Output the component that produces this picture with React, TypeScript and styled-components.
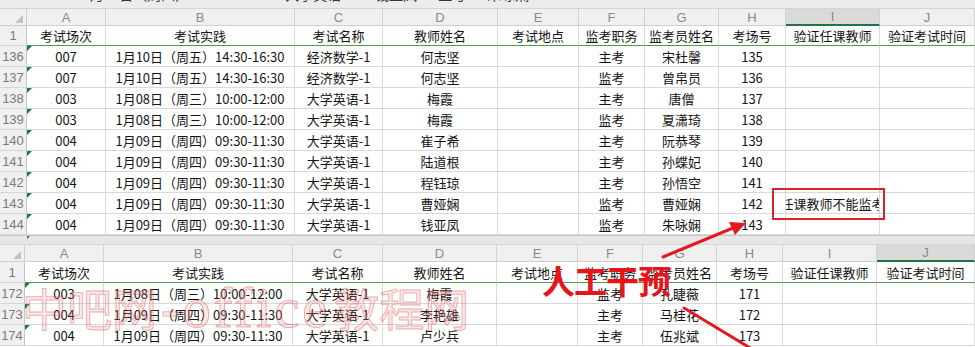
import React from 'react'
import styled, { createGlobalStyle } from 'styled-components'

const GlobalStyle = createGlobalStyle`
  html, body {
    margin: 0;
    padding: 0;
    background: #fff;
  }
  body {
    width: 975px;
    height: 347px;
    overflow: hidden;
    font-family: "Noto Sans CJK SC", "Liberation Sans", sans-serif;
  }
`

const Screen = styled.div`
  position: relative;
  width: 975px;
  height: 347px;
  overflow: hidden;
  display: flex;
  flex-direction: column;
  background: #fff;
`

const FormulaStrip = styled.div`
  height: 9px;
  flex: none;
  box-sizing: border-box;
  background: #ececec;
  border-bottom: 1px solid #d4d4d4;
  overflow: hidden;
  padding-left: 82px;
`

const FormulaText = styled.div`
  margin-top: -15px;
  font-size: 14px;
  line-height: 18px;
  color: #333;
  white-space: nowrap;
  word-spacing: 18px;
`

const Grid = styled.div<{ $cols: string; $rows: string }>`
  display: grid;
  flex: none;
  grid-template-columns: ${p => p.$cols};
  grid-template-rows: ${p => p.$rows};
`

const Corner = styled.div`
  position: relative;
  background: #f0f0f0;
  border-right: 1px solid #cfcfcf;
  border-bottom: 1px solid #cfcfcf;

  &::after {
    content: '';
    position: absolute;
    right: 3px;
    bottom: 2px;
    width: 0;
    height: 0;
    border-left: 8px solid transparent;
    border-bottom: 8px solid #c2c2c2;
  }
`

const ColHead = styled.div<{ $selected?: boolean }>`
  display: flex;
  align-items: center;
  justify-content: center;
  box-sizing: border-box;
  background: ${p => (p.$selected ? '#dadada' : '#f0f0f0')};
  border-right: 1px solid #d2d2d2;
  border-bottom: ${p => (p.$selected ? '2px solid #217346' : '1px solid #cfcfcf')};
  font-family: "Liberation Sans", Arial, sans-serif;
  font-size: 13px;
  color: #8a8a8a;
`

const RowHead = styled.div`
  display: flex;
  align-items: center;
  justify-content: center;
  box-sizing: border-box;
  background: #f0f0f0;
  border-right: 1px solid #c6c6c6;
  border-bottom: 1px solid #d6d6d6;
  font-family: "Liberation Sans", Arial, sans-serif;
  font-size: 13px;
  color: #7a7a7a;
  overflow: hidden;
`

const Cell = styled.div<{ $flag?: boolean; $title?: boolean }>`
  position: relative;
  display: flex;
  align-items: center;
  justify-content: center;
  box-sizing: border-box;
  background: #fff;
  border-right: 1px solid #d9d9d9;
  border-bottom: ${p => (p.$title ? '1px solid #4f9a55' : '1px solid #d9d9d9')};
  font-size: 13px;
  color: #151515;
  white-space: nowrap;
  overflow: hidden;

  &::before {
    content: '';
    display: ${p => (p.$flag ? 'block' : 'none')};
    position: absolute;
    left: 0;
    top: 0;
    border-top: 5px solid #1f7a37;
    border-right: 5px solid transparent;
  }
`

const Splitter = styled.div`
  position: relative;
  height: 10px;
  flex: none;
  box-sizing: border-box;
  background: #e6e6e6;
  border-top: 1px solid #c9c9c9;
  border-bottom: 1px solid #d6d6d6;

  &::before {
    content: '';
    position: absolute;
    left: 27px;
    top: 0;
    border-top: 3px solid #1f7a37;
    border-right: 3px solid transparent;
  }
`

const NoteBox = styled.div`
  position: absolute;
  left: 772px;
  top: 188px;
  width: 113px;
  height: 32px;
  box-sizing: border-box;
  border: 2px solid #d9232b;
`

const Callout = styled.div`
  position: absolute;
  left: 542px;
  top: 262px;
  font-size: 33px;
  line-height: 36px;
  font-weight: 700;
  color: #e8141c;
  letter-spacing: -1px;
  white-space: nowrap;
`

const Watermark = styled.div`
  position: absolute;
  left: 22px;
  top: 278px;
  font-size: 45px;
  line-height: 60px;
  white-space: nowrap;
  color: rgba(240, 160, 160, 0.22);
  -webkit-text-stroke: 1px rgba(214, 60, 60, 0.4);
  pointer-events: none;
`

const WatermarkLatin = styled.span`
  font-family: "Liberation Serif", serif;
  font-size: 56px;
  letter-spacing: 3px;
  margin: 0 4px;
`

const Arrows = styled.svg`
  position: absolute;
  left: 0;
  top: 0;
  pointer-events: none;
`

const LETTERS = ['A', 'B', 'C', 'D', 'E', 'F', 'G', 'H', 'I', 'J']
const TITLES = ['考试场次', '考试实践', '考试名称', '教师姓名', '考试地点', '监考职务', '监考员姓名', '考场号', '验证任课教师', '验证考试时间']

const FRI = '1月10日（周五）14:30-16:30'
const WED = '1月08日（周三）10:00-12:00'
const THU = '1月09日（周四）09:30-11:30'

type Row = { n: number; cells: string[] }

const upperRows: Row[] = [
  { n: 136, cells: ['007', FRI, '经济数学-1', '何志坚', '', '主考', '宋杜馨', '135', '', ''] },
  { n: 137, cells: ['007', FRI, '经济数学-1', '何志坚', '', '监考', '曾帛员', '136', '', ''] },
  { n: 138, cells: ['003', WED, '大学英语-1', '梅霞', '', '主考', '唐僧', '137', '', ''] },
  { n: 139, cells: ['003', WED, '大学英语-1', '梅霞', '', '监考', '夏潇琦', '138', '', ''] },
  { n: 140, cells: ['004', THU, '大学英语-1', '崔子希', '', '主考', '阮恭琴', '139', '', ''] },
  { n: 141, cells: ['004', THU, '大学英语-1', '陆道根', '', '主考', '孙蝶妃', '140', '', ''] },
  { n: 142, cells: ['004', THU, '大学英语-1', '程钰琼', '', '主考', '孙悟空', '141', '', ''] },
  { n: 143, cells: ['004', THU, '大学英语-1', '曹娅娴', '', '监考', '曹娅娴', '142', '任课教师不能监考', ''] },
  { n: 144, cells: ['004', THU, '大学英语-1', '钱亚凤', '', '监考', '朱咏娴', '143', '', ''] },
]

const lowerRows: Row[] = [
  { n: 172, cells: ['003', WED, '大学英语-1', '梅霞', '', '监考', '孔睫薇', '171', '', ''] },
  { n: 173, cells: ['004', THU, '大学英语-1', '李艳雄', '', '主考', '马桂花', '172', '', ''] },
  { n: 174, cells: ['004', THU, '大学英语-1', '卢少兵', '', '主考', '伍兆斌', '173', '', ''] },
]

type PaneProps = {
  widths: number[]
  titleHeight: number
  selected: string
  rows: Row[]
}

const Pane = ({ widths, titleHeight, selected, rows }: PaneProps) => (
  <Grid
    $cols={widths.map(w => `${w}px`).join(' ')}
    $rows={`17px ${titleHeight}px repeat(${rows.length}, 21px)`}
  >
    <Corner />
    {LETTERS.map(l => (
      <ColHead key={l} $selected={l === selected}>{l}</ColHead>
    ))}
    <RowHead>1</RowHead>
    {TITLES.map(t => (
      <Cell key={t} $title>{t}</Cell>
    ))}
    {rows.map(r => (
      <React.Fragment key={r.n}>
        <RowHead>{r.n}</RowHead>
        {r.cells.map((c, i) => (
          <Cell key={i} $flag={i === 0}>{c}</Cell>
        ))}
      </React.Fragment>
    ))}
  </Grid>
)

export default function App() {
  return (
    <Screen>
      <GlobalStyle />
      <FormulaStrip>
        <FormulaText>1月09日（周四）09:30-11:30 大学英语-1 钱亚凤 监考 朱咏娴 143</FormulaText>
      </FormulaStrip>
      <Pane
        widths={[27, 79, 189, 88, 115, 81, 66, 74, 67, 94, 95]}
        titleHeight={20}
        selected="I"
        rows={upperRows}
      />
      <Splitter />
      <Pane
        widths={[25, 79, 189, 90, 114, 81, 65, 74, 66, 94, 98]}
        titleHeight={21}
        selected="J"
        rows={lowerRows}
      />

      <Watermark>
        中吧网<WatermarkLatin>-office</WatermarkLatin>教程网
      </Watermark>
      <NoteBox />
      <Callout>人工干预</Callout>
      <Arrows width={975} height={347} viewBox="0 0 975 347">
        <g stroke="#e3191f" strokeWidth={3} strokeLinecap="round" fill="#e3191f">
          <line x1={663} y1={257} x2={733} y2={228} />
          <polygon points="746,223 729,222 735,235" stroke="none" />
          <line x1={684} y1={308} x2={770} y2={360} />
        </g>
      </Arrows>
    </Screen>
  )
}
